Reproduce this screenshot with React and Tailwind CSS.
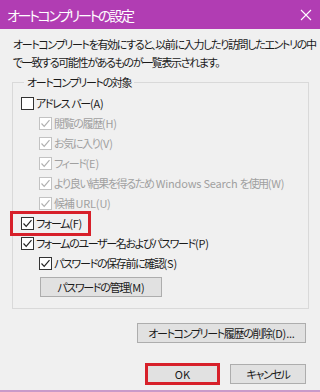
import React from 'react';

const font = { fontFamily: '"Noto Sans CJK JP", "Noto Sans", sans-serif' };

// Latin runs keep normal spacing; the Japanese runs are drawn tighter
function Txt({ children }) {
    const parts = String(children).split(/([\x20-\x7e]+)/).filter(Boolean);
    return parts.map((p, i) =>
        /^[\x20-\x7e]+$/.test(p)
            ? <span key={i} className="tracking-[-0.2px] whitespace-pre">{p}</span>
            : <span key={i}>{p}</span>
    );
}

function Box({ checked, disabled }) {
    const border = disabled ? 'border-[#c2c2c2]' : 'border-[#333333]';
    const stroke = disabled ? '#b0b0b0' : '#222222';
    return (
        <span className={`w-[13px] h-[13px] border ${border} bg-white flex items-center justify-center shrink-0`}>
            {checked && (
                <svg width="11" height="11" viewBox="0 0 11 11">
                    <path d="M1.5 5.5 L4.2 8.3 L9.5 2.2" fill="none" stroke={stroke} strokeWidth="1.2" />
                </svg>
            )}
        </span>
    );
}

function Row({ label, checked, disabled, indent }) {
    return (
        <div className={`h-[20px] flex items-center gap-[2px] whitespace-nowrap ${indent ? 'pl-[18px]' : ''} ${disabled ? 'text-[#a0a0a0]' : 'text-[#1a1a1a]'}`}>
            <Box checked={checked} disabled={disabled} />
            <span className="leading-none"><Txt>{label}</Txt></span>
        </div>
    );
}

export default function App() {
    return (
        <div
            className="w-[320px] h-[392px] bg-[#f0f0f0] flex flex-col border-b-2 border-[#c99ac9] text-[11px] tracking-[-1.35px] [font-feature-settings:'palt'] overflow-hidden"
            style={font}
        >
            {/* Title bar */}
            <div className="h-[29px] shrink-0 bg-[#b13db3] flex items-center justify-between pl-[7px] pr-[7px]">
                <span className="text-white text-[14px] tracking-[-2.3px] leading-none">オートコンプリートの設定</span>
                <svg width="12" height="12" viewBox="0 0 12 12" className="mr-[1px]">
                    <path d="M1 1 L11 11 M11 1 L1 11" stroke="white" strokeWidth="1.1" />
                </svg>
            </div>

            <div className="px-[12px] pt-[6px]">
                <p className="leading-[18px] text-[#1a1a1a] pl-[1px] whitespace-nowrap">
                    オートコンプリートを有効にすると、以前に入力したり訪問したエントリの中<br />
                    で一致する可能性があるものが一覧表示されます。
                </p>

                <fieldset className="mt-[2px] w-[297px] border border-[#d9d9d9] pl-[8px] pb-[11px]">
                    <legend className="ml-[3px] px-[3px] leading-[18px] text-[#1a1a1a]">オートコンプリートの対象</legend>
                    <div className="pt-[2px]">
                        <Row label="アドレス バー(A)" />
                        <Row label="閲覧の履歴(H)" checked disabled indent />
                        <Row label="お気に入り(V)" checked disabled indent />
                        <Row label="フィード(E)" checked disabled indent />
                        <Row label="より良い結果を得るため Windows Search を使用(W)" checked disabled indent />
                        <Row label="候補 URL(U)" checked disabled indent />
                        <div className="h-[20px] flex items-center">
                            <div className="-ml-[11px] h-[25px] pl-[8px] pr-[6px] border-[3px] border-[#d7202a] flex items-center gap-[2px] text-[#1a1a1a] whitespace-nowrap">
                                <Box checked />
                                <span className="leading-none"><Txt>フォーム(F)</Txt></span>
                            </div>
                        </div>
                        <Row label="フォームのユーザー名およびパスワード(P)" checked />
                        <Row label="パスワードの保存前に確認(S)" checked indent />
                        <button className="mt-[4px] ml-[19px] w-[122px] h-[20px] bg-[#e1e1e1] border border-[#adadad] text-[#1a1a1a] leading-none">
                            <Txt>パスワードの管理(M)</Txt>
                        </button>
                    </div>
                </fieldset>

                <div className="flex justify-end w-[294px] mt-[14px]">
                    <button className="w-[169px] h-[20px] bg-[#e1e1e1] border border-[#adadad] text-[#1a1a1a] leading-none whitespace-nowrap">
                        <Txt>オートコンプリート履歴の削除(D)...</Txt>
                    </button>
                </div>

                <div className="flex justify-end gap-[10px] w-[294px] mt-[20px]">
                    <button className="w-[75px] h-[22px] bg-[#e1e1e1] border-[3px] border-[#d7202a] text-[#1a1a1a] leading-none tracking-normal">
                        OK
                    </button>
                    <button className="w-[76px] h-[20px] mt-[1px] bg-[#e1e1e1] border border-[#adadad] text-[#1a1a1a] leading-none">
                        キャンセル
                    </button>
                </div>
            </div>
        </div>
    );
}
